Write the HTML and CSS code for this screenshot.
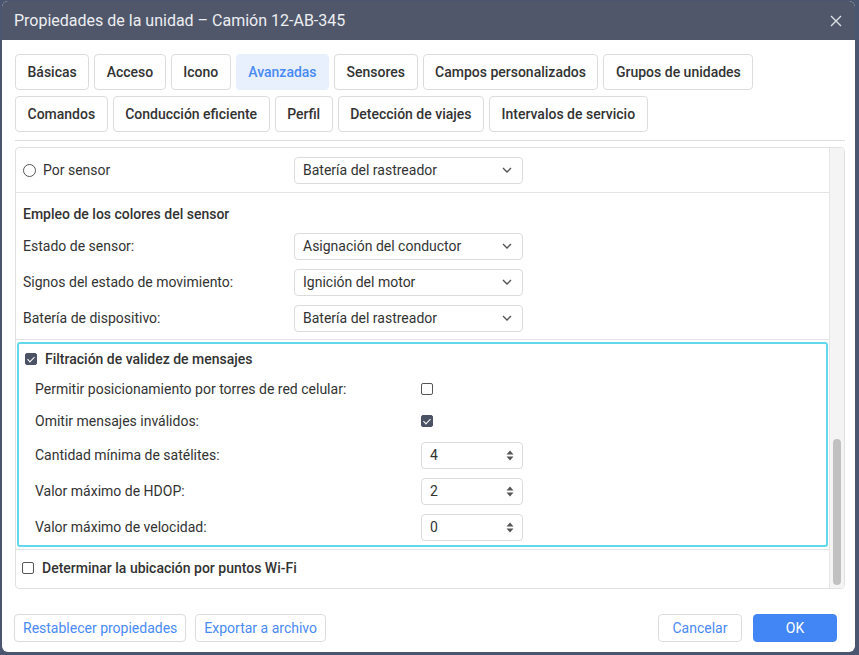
FILE: index.html
```html
<!DOCTYPE html>
<html lang="es">
<head>
    <meta charset="UTF-8">
    <meta name="viewport" content="width=device-width, initial-scale=1.0">
    <title>Propiedades de la unidad</title>
    <link rel="stylesheet" href="styles.css">
</head>
<body>
    <div class="dialog">
        <div class="titlebar">
            <span class="title">Propiedades de la unidad – Camión 12-AB-345</span>
            <svg class="close" width="12" height="12" viewBox="0 0 12 12"><path d="M1 1L11 11M11 1L1 11" stroke="#dfe1e6" stroke-width="1.4"/></svg>
        </div>
        <div class="body">
            <div class="tabs">
                <button class="tab">Básicas</button>
                <button class="tab">Acceso</button>
                <button class="tab">Icono</button>
                <button class="tab active">Avanzadas</button>
                <button class="tab">Sensores</button>
                <button class="tab">Campos personalizados</button>
                <button class="tab">Grupos de unidades</button>
            </div>
            <div class="tabs">
                <button class="tab">Comandos</button>
                <button class="tab">Conducción eficiente</button>
                <button class="tab">Perfil</button>
                <button class="tab">Detección de viajes</button>
                <button class="tab">Intervalos de servicio</button>
            </div>
            <div class="separator"></div>

            <div class="panel">
                <div class="content">
                    <div class="section top">
                        <div class="row">
                            <label class="radio-label"><span class="radio"></span>Por sensor</label>
                            <div class="select">Batería del rastreador<svg class="chev" width="10" height="6" viewBox="0 0 10 6"><path d="M1 1l4 4 4-4" fill="none" stroke="#555" stroke-width="1.4"/></svg></div>
                        </div>
                    </div>
                    <div class="section colors">
                        <div class="heading">Empleo de los colores del sensor</div>
                        <div class="row">
                            <span>Estado de sensor:</span>
                            <div class="select">Asignación del conductor<svg class="chev" width="10" height="6" viewBox="0 0 10 6"><path d="M1 1l4 4 4-4" fill="none" stroke="#555" stroke-width="1.4"/></svg></div>
                        </div>
                        <div class="row">
                            <span>Signos del estado de movimiento:</span>
                            <div class="select">Ignición del motor<svg class="chev" width="10" height="6" viewBox="0 0 10 6"><path d="M1 1l4 4 4-4" fill="none" stroke="#555" stroke-width="1.4"/></svg></div>
                        </div>
                        <div class="row">
                            <span>Batería de dispositivo:</span>
                            <div class="select">Batería del rastreador<svg class="chev" width="10" height="6" viewBox="0 0 10 6"><path d="M1 1l4 4 4-4" fill="none" stroke="#555" stroke-width="1.4"/></svg></div>
                        </div>
                    </div>
                    <div class="section filter-wrap">
                        <div class="filter">
                            <div class="heading check-heading"><span class="check on"></span>Filtración de validez de mensajes</div>
                            <div class="frow">
                                <span>Permitir posicionamiento por torres de red celular:</span>
                                <span class="check"></span>
                            </div>
                            <div class="frow">
                                <span>Omitir mensajes inválidos:</span>
                                <span class="check on"></span>
                            </div>
                            <div class="frow">
                                <span>Cantidad mínima de satélites:</span>
                                <div class="number">4<svg class="spin" width="8" height="11" viewBox="0 0 8 11"><path d="M4 0.5L7.5 4.5H0.5Z M4 10.5L7.5 6.5H0.5Z" fill="#555"/></svg></div>
                            </div>
                            <div class="frow">
                                <span>Valor máximo de HDOP:</span>
                                <div class="number">2<svg class="spin" width="8" height="11" viewBox="0 0 8 11"><path d="M4 0.5L7.5 4.5H0.5Z M4 10.5L7.5 6.5H0.5Z" fill="#555"/></svg></div>
                            </div>
                            <div class="frow">
                                <span>Valor máximo de velocidad:</span>
                                <div class="number">0<svg class="spin" width="8" height="11" viewBox="0 0 8 11"><path d="M4 0.5L7.5 4.5H0.5Z M4 10.5L7.5 6.5H0.5Z" fill="#555"/></svg></div>
                            </div>
                        </div>
                    </div>
                    <div class="section wifi">
                        <div class="heading check-heading"><span class="check"></span>Determinar la ubicación por puntos Wi-Fi</div>
                    </div>
                </div>
                <div class="scrollbar"><div class="thumb"></div></div>
            </div>
        </div>
        <div class="footer">
            <button class="btn">Restablecer propiedades</button>
            <button class="btn">Exportar a archivo</button>
            <span class="spacer"></span>
            <button class="btn">Cancelar</button>
            <button class="btn primary">OK</button>
        </div>
    </div>
</body>
</html>
```

FILE: styles.css
```css
body {
    margin: 0;
    background-color: #4a5570;
    font-family: Roboto, 'Liberation Sans', sans-serif;
    font-size: 14px;
    color: #333;
}
.dialog {
    width: 853px;
    height: 651px;
    margin: 1px 0 0 2px;
    background: white;
    border-radius: 6px;
    overflow: hidden;
    display: flex;
    flex-direction: column;
}
.titlebar {
    height: 39px;
    background: #50576a;
    display: flex;
    align-items: center;
    justify-content: space-between;
    padding: 0 13px 0 12px;
    flex-shrink: 0;
}
.title {
    color: #eceef2;
    font-size: 16px;
}
.close {
    margin-top: 1px;
}
.body {
    padding: 14px 10px 0 13px;
}
.tabs {
    display: flex;
    gap: 5px;
    margin-bottom: 6px;
}
.tab {
    height: 36px;
    padding: 0 11.5px;
    background: white;
    border: 1px solid #dcdcdc;
    border-radius: 4px;
    font-family: inherit;
    font-size: 14px;
    font-weight: 500;
    color: #333;
}
.tab.active {
    background: #e8f0fe;
    border-color: #e8f0fe;
    color: #4a8af4;
}
.separator {
    border-top: 1px solid #dedede;
    margin: 8px 0 6px;
}
.panel {
    display: flex;
    height: 440px;
    border: 1px solid #e0e0e0;
    border-radius: 4px;
    overflow: hidden;
}
.content {
    flex: 1;
}
.scrollbar {
    width: 14px;
    background: #f4f4f4;
    border-left: 1px solid #e6e6e6;
    display: flex;
    flex-direction: column;
    justify-content: flex-end;
    align-items: center;
    padding-bottom: 3px;
}
.thumb {
    width: 8px;
    height: 146px;
    background: #c1c1c1;
    border-radius: 4px;
}
.section {
    border-bottom: 1px solid #e4e4e4;
}
.section.top {
    height: 44px;
    display: flex;
    align-items: center;
}
.row {
    display: grid;
    grid-template-columns: 271px 229px;
    align-items: center;
    padding-left: 7px;
    height: 36px;
}
.section.top .row {
    width: 100%;
}
.colors {
    padding: 10px 0 3px;
}
.heading {
    font-weight: 500;
    padding-left: 7px;
    height: 22px;
    display: flex;
    align-items: center;
    margin-bottom: 3px;
}
.radio-label {
    display: flex;
    align-items: center;
}
.radio {
    width: 11px;
    height: 11px;
    border: 1px solid #555;
    border-radius: 50%;
    margin-right: 7px;
}
.select {
    height: 25px;
    border: 1px solid #dcdcdc;
    border-radius: 4px;
    padding: 0 10px 0 8px;
    display: flex;
    align-items: center;
    justify-content: space-between;
}
.filter-wrap {
    padding: 2px 1px 2px 1px;
}
.filter {
    border: 2px solid #62d9ea;
    border-radius: 3px;
    padding: 4px 0 0;
}
.check-heading {
    padding-left: 6px;
}
.check {
    width: 10px;
    height: 10px;
    border: 1px solid #555;
    border-radius: 2px;
    margin-right: 8px;
    display: inline-block;
    position: relative;
}
.check.on {
    background: #4b5264;
    border-color: #4b5264;
}
.check.on::after {
    content: '';
    position: absolute;
    left: 3px;
    top: 1px;
    width: 3px;
    height: 6px;
    border: solid white;
    border-width: 0 1.5px 1.5px 0;
    transform: rotate(45deg);
}
.frow {
    display: grid;
    grid-template-columns: 386px 102px;
    align-items: center;
    padding-left: 16px;
    height: 36px;
}
.frow:nth-child(2), .frow:nth-child(3) {
    height: 32px;
}
.frow .check {
    margin: 0;
}
.number {
    height: 25px;
    border: 1px solid #dcdcdc;
    border-radius: 4px;
    padding: 0 8px 0 8px;
    display: flex;
    align-items: center;
    justify-content: space-between;
}
.wifi {
    border-bottom: none;
    height: 36px;
    display: flex;
    align-items: center;
}
.wifi .heading {
    margin: 0;
}
.footer {
    margin-top: auto;
    display: flex;
    gap: 9px;
    padding: 0 18px 10px 12px;
}
.spacer {
    flex: 1;
}
.btn {
    height: 28px;
    padding: 0 8px;
    background: white;
    border: 1px solid #dcdcdc;
    border-radius: 4px;
    font-family: inherit;
    font-size: 14px;
    color: #4a8af4;
}
.btn.primary {
    width: 84px;
    background: #4285f4;
    border-color: #4285f4;
    color: white;
    margin-left: 2px;
}
.footer .btn:nth-child(4) {
    width: 84px;
}
```
